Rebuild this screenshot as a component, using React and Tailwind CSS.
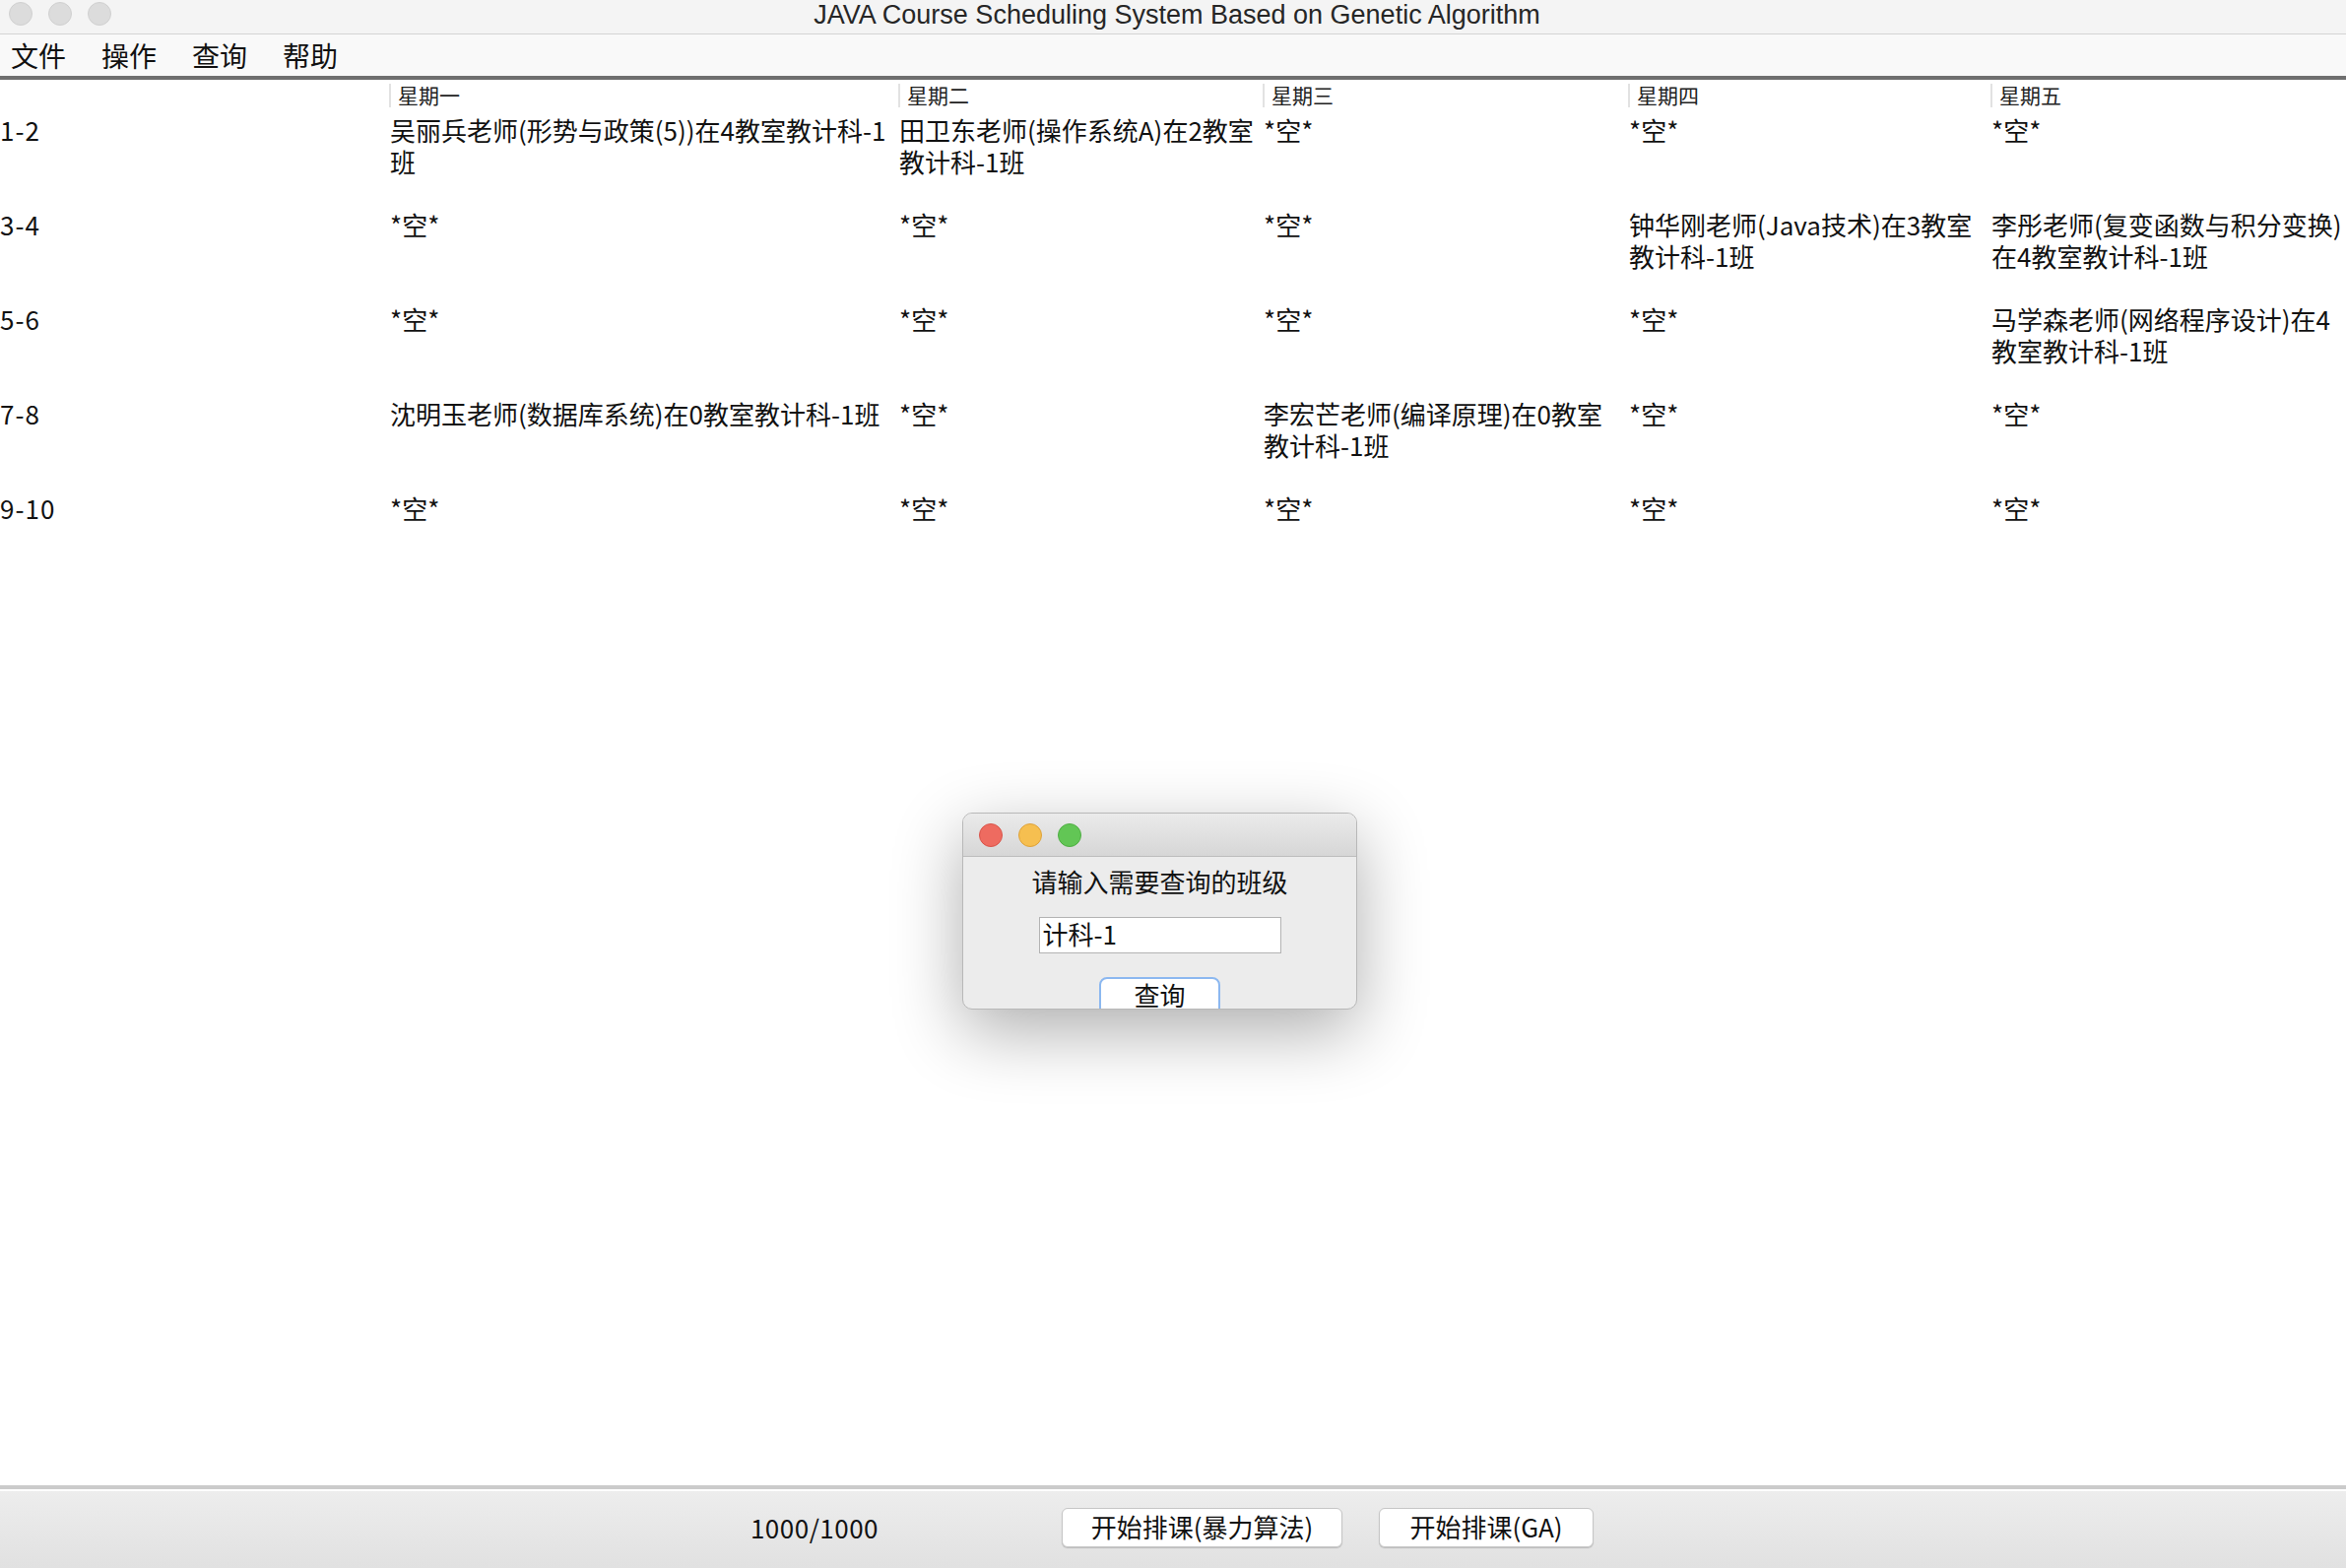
import React from "react";

const CJK = { fontFamily: '"Noto Sans CJK SC", "Noto Sans", sans-serif' };

const colWidths = ["w-[395px]", "w-[517px]", "w-[370px]", "w-[371px]", "w-[368px]", "w-[361px]"];
const headers = ["", "星期一", "星期二", "星期三", "星期四", "星期五"];

const rows = [
  {
    t: "1-2",
    c: [
      ["吴丽兵老师(形势与政策(5))在4教室教计科-1", "班"],
      ["田卫东老师(操作系统A)在2教室", "教计科-1班"],
      ["*空*"],
      ["*空*"],
      ["*空*"],
    ],
  },
  {
    t: "3-4",
    c: [
      ["*空*"],
      ["*空*"],
      ["*空*"],
      ["钟华刚老师(Java技术)在3教室", "教计科-1班"],
      ["李彤老师(复变函数与积分变换)", "在4教室教计科-1班"],
    ],
  },
  {
    t: "5-6",
    c: [
      ["*空*"],
      ["*空*"],
      ["*空*"],
      ["*空*"],
      ["马学森老师(网络程序设计)在4", "教室教计科-1班"],
    ],
  },
  {
    t: "7-8",
    c: [
      ["沈明玉老师(数据库系统)在0教室教计科-1班"],
      ["*空*"],
      ["李宏芒老师(编译原理)在0教室", "教计科-1班"],
      ["*空*"],
      ["*空*"],
    ],
  },
  {
    t: "9-10",
    c: [["*空*"], ["*空*"], ["*空*"], ["*空*"], ["*空*"]],
  },
];

function Light({ bg, border }) {
  return <div className={`w-[24px] h-[24px] rounded-full border ${bg} ${border}`} />;
}

export default function App() {
  return (
    <div className="w-[2382px] h-[1592px] relative overflow-hidden bg-white flex flex-col" style={CJK}>
      {/* Title bar */}
      <div className="h-[35px] shrink-0 bg-[#f4f4f4] border-b border-[#d4d4d4] relative flex items-center justify-center">
        <div className="absolute left-[9px] top-[2px] flex gap-[16px]">
          <div className="w-[24px] h-[24px] rounded-full bg-[#dcdcdc] border border-[#d0d0d0]" />
          <div className="w-[24px] h-[24px] rounded-full bg-[#dcdcdc] border border-[#d0d0d0]" />
          <div className="w-[24px] h-[24px] rounded-full bg-[#dcdcdc] border border-[#d0d0d0]" />
        </div>
        <span
          className="text-[27px] leading-[30px] text-[#262626] -mt-[4px] ml-[8px]"
          style={{ fontFamily: '"Liberation Sans", Arial, sans-serif' }}
        >
          JAVA Course Scheduling System Based on Genetic Algorithm
        </span>
      </div>

      {/* Menu bar */}
      <div className="h-[42px] shrink-0 bg-[#f9f9f9] flex items-center pl-[11px] gap-[36px] text-[28px] leading-[34px] text-[#111]">
        <span>文件</span>
        <span>操作</span>
        <span>查询</span>
        <span>帮助</span>
      </div>
      <div className="h-[4px] shrink-0 bg-[#6f6f6f]" />

      {/* Table area */}
      <div className="flex-1 flex flex-col bg-white">
        <div className="h-[35px] flex items-center">
          {headers.map((h, i) => (
            <div key={i} className={`${colWidths[i]} shrink-0 h-full flex items-center`}>
              {h && (
                <div className="h-[24px] -mt-[4px] border-l-2 border-[#e2e2e2] pl-[7px] text-[21px] leading-[22px] text-[#222]">
                  {h}
                </div>
              )}
            </div>
          ))}
        </div>
        {rows.map((r, ri) => (
          <div key={ri} className="h-[96px] flex text-[26px] leading-[32px] text-[#111]">
            <div className={`${colWidths[0]} shrink-0 tracking-[1px]`}>{r.t}</div>
            {r.c.map((lines, ci) => (
              <div key={ci} className={`${colWidths[ci + 1]} shrink-0 pl-[1px] whitespace-nowrap`}>
                {lines.map((l, li) => (
                  <div key={li}>{l}</div>
                ))}
              </div>
            ))}
          </div>
        ))}
      </div>

      {/* Bottom panel */}
      <div className="h-[4px] shrink-0 bg-[#cbcbcb]" />
      <div className="h-[2px] shrink-0 bg-white" />
      <div className="h-[78px] shrink-0 bg-gradient-to-b from-[#ededed] to-[#e1e1e1] flex items-center text-[26px] text-[#111]">
        <div className="ml-[752px] w-[150px] text-center leading-[32px] -mt-[5px] tracking-[0.5px]">1000/1000</div>
        <button className="ml-[176px] -mt-[4px] w-[285px] h-[40px] rounded-[6px] bg-white border border-[#c6c6c6] shadow-[0_1px_1px_rgba(0,0,0,0.18)] leading-[34px] text-[26px] text-[#111] pb-[2px]">
          开始排课(暴力算法)
        </button>
        <button className="ml-[37px] -mt-[4px] w-[218px] h-[40px] rounded-[6px] bg-white border border-[#c6c6c6] shadow-[0_1px_1px_rgba(0,0,0,0.18)] leading-[34px] text-[26px] text-[#111] pb-[2px]">
          开始排课(GA)
        </button>
      </div>

      {/* Dialog */}
      <div className="absolute left-[977px] top-[825px] w-[401px] h-[200px] rounded-[10px] bg-[#ececec] border border-[#b8b8b8] overflow-hidden shadow-[0_22px_70px_rgba(0,0,0,0.32)] flex flex-col">
        <div className="h-[44px] shrink-0 bg-gradient-to-b from-[#ebebeb] to-[#d6d6d6] border-b border-[#bdbdbd] flex items-center pl-[16px] gap-[16px]">
          <Light bg="bg-[#ee6b60]" border="border-[#d8544a]" />
          <Light bg="bg-[#f6bf50]" border="border-[#dea23a]" />
          <Light bg="bg-[#62c655]" border="border-[#4fae43]" />
        </div>
        <div className="flex flex-col items-center">
          <div className="mt-[7px] h-[38px] text-[26px] leading-[36px] text-[#111]">请输入需要查询的班级</div>
          <div className="mt-[16px] w-[246px] h-[37px] bg-white border border-[#b3b3b3] pl-[3px] text-[26px] leading-[31px] text-[#111]">
            计科-1
          </div>
          <button className="mt-[24px] w-[123px] h-[44px] rounded-[8px] bg-white border-2 border-[#8cb8f0] text-[26px] leading-[32px] text-[#111] flex justify-center">
            查询
          </button>
        </div>
      </div>
    </div>
  );
}
